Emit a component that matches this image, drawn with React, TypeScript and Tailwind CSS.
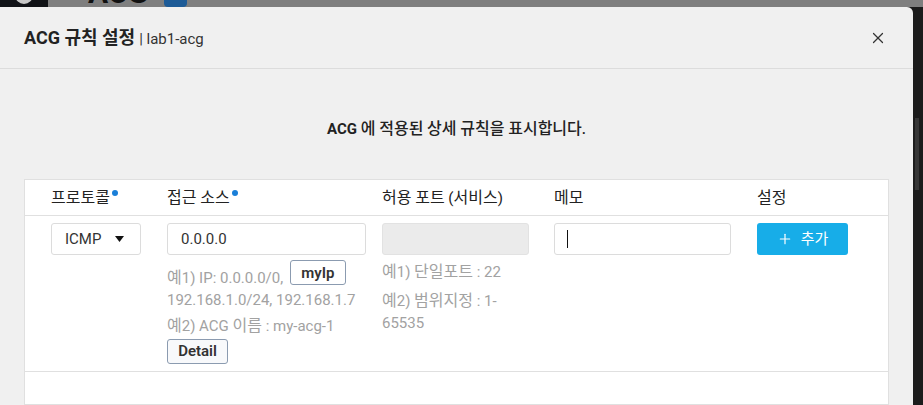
import { X, Plus } from "lucide-react"

const font = { fontFamily: "Roboto, 'Noto Sans CJK KR', sans-serif" }

// hangul runs render a touch larger than the latin text, as in the original
const K = ({ children }: { children: string }) => (
  <>
    {children.split(/([\uac00-\ud7a3]+)/).map((part, i) =>
      /[\uac00-\ud7a3]/.test(part) ? (
        <span key={i} className="text-[16px]">
          {part}
        </span>
      ) : (
        part
      )
    )}
  </>
)

const Dot = () => (
  <span className="ml-[2px] inline-block h-[6px] w-[6px] -translate-y-[6px] rounded-full bg-[#1a7fd8] align-middle" />
)

const TopStrip = () => (
  <div className="flex h-[7px] overflow-hidden bg-[#7f7f7f]">
    <div className="relative h-full w-[48px] bg-[#111317]">
      <span className="absolute left-[15px] top-[-14px] h-[18px] w-[18px] rounded-full bg-[#c8c8c8]" />
    </div>
    <div className="relative ml-[40px] h-full w-[70px]">
      <span className="absolute top-[-22px] text-[30px] font-bold leading-[30px] text-[#111]">ACG</span>
    </div>
    <div className="ml-[6px] h-full w-[23px] rounded-b-sm bg-[#1d5b97]" />
  </div>
)

const App = () => {
  return (
    <div className="flex h-[405px] w-[923px] flex-col overflow-hidden bg-[#1c1c1c]" style={font}>
      <TopStrip />
      <div className="flex flex-1">
        <div className="flex w-[913px] flex-col rounded-tr-[6px] bg-[#f0f0f0]">
          <div className="flex h-[62px] items-center justify-between border-b border-[#dcdcdc] pl-6 pr-[26px]">
            <div className="flex items-baseline">
              <span className="text-[18px] font-bold text-[#222]">ACG 규칙 설정</span>
              <span className="ml-1 text-[15px] text-[#333]">| lab1-acg</span>
            </div>
            <X className="h-[18px] w-[18px] text-[#333]" strokeWidth={1.6} />
          </div>

          <div className="flex flex-1 flex-col px-6 pt-[50px]">
            <p className="text-center text-[15px] font-medium leading-5 text-[#222]">
              <span className="font-bold">ACG</span> <K>에 적용된 상세 규칙을 표시합니다.</K>
            </p>

            <div className="mt-[40px] flex-1 border border-[#e0e0e0] bg-white">
              <div className="grid h-[36px] grid-cols-[116px_215px_172px_203px_1fr] items-center border-b border-[#e0e0e0] pl-[26px] text-[15px] text-[#222]">
                <div>
                  <K>프로토콜</K>
                  <Dot />
                </div>
                <div>
                  <K>접근 소스</K>
                  <Dot />
                </div>
                <div>
                  <K>허용 포트 (서비스)</K>
                </div>
                <div>
                  <K>메모</K>
                </div>
                <div>
                  <K>설정</K>
                </div>
              </div>

              <div className="grid grid-cols-[116px_215px_172px_203px_1fr] border-b border-[#e0e0e0] pb-[7px] pl-[26px] pt-[7px] text-[15px]">
                <div>
                  <div className="flex h-[32px] w-[90px] items-center justify-between rounded-[3px] border border-[#dcdcdc] pl-[13px] pr-[16px] text-[#333]">
                    <span>ICMP</span>
                    <svg width="9" height="6" viewBox="0 0 9 6">
                      <path d="M0 0h9L4.5 6z" fill="#111" />
                    </svg>
                  </div>
                </div>

                <div className="pr-4">
                  <div className="flex h-[32px] w-[199px] items-center rounded-[3px] border border-[#dcdcdc] px-[13px] text-[#333]">
                    0.0.0.0
                  </div>
                  <p className="mt-[12px] leading-[22px] text-[#a2a2a2]">
                    <K>예1) IP: 0.0.0.0/0,</K>{" "}
                    <span className="-mt-[7px] ml-[3px] inline-flex h-[25px] w-[56px] items-center justify-center rounded-[3px] border border-[#8b9bb0] align-top font-semibold text-[#333]">
                      myIp
                    </span>
                    <br />
                    192.168.1.0/24, 192.168.1.7
                  </p>
                  <p className="mt-[4px] leading-[22px] text-[#a2a2a2]">
                    <K>예2) ACG 이름 : my-acg-1</K>
                  </p>
                  <span className="mt-[2px] flex h-[25px] w-[61px] items-center justify-center rounded-[3px] border border-[#8b9bb0] bg-[#f8f9fb] font-semibold text-[#333]">
                    Detail
                  </span>
                </div>

                <div className="pr-4">
                  <div className="h-[32px] w-[147px] rounded-[3px] border border-[#e2e2e2] bg-[#ebebeb]" />
                  <p className="mt-[6px] leading-[21px] text-[#a2a2a2]">
                    <K>예1) 단일포트 : 22</K>
                  </p>
                  <p className="mt-[7px] leading-[22px] text-[#a2a2a2]">
                    <K>예2) 범위지정 : 1-</K>
                    <br />
                    65535
                  </p>
                </div>

                <div>
                  <div className="flex h-[32px] w-[177px] items-center rounded-[3px] border border-[#dcdcdc] px-[12px]">
                    <span className="h-[18px] w-px bg-[#111]" />
                  </div>
                </div>

                <div>
                  <button className="flex h-[32px] w-[91px] items-center justify-center gap-[8px] rounded-[3px] bg-[#17ade8] text-[15px] text-white">
                    <Plus className="h-[16px] w-[16px]" strokeWidth={1.8} />
                    추가
                  </button>
                </div>
              </div>
            </div>
          </div>
        </div>
        <div className="w-[10px] pl-[2px] pt-[111px]">
          <div className="h-[72px] w-[4px] bg-[#363636]" />
        </div>
      </div>
    </div>
  )
}

export default App
